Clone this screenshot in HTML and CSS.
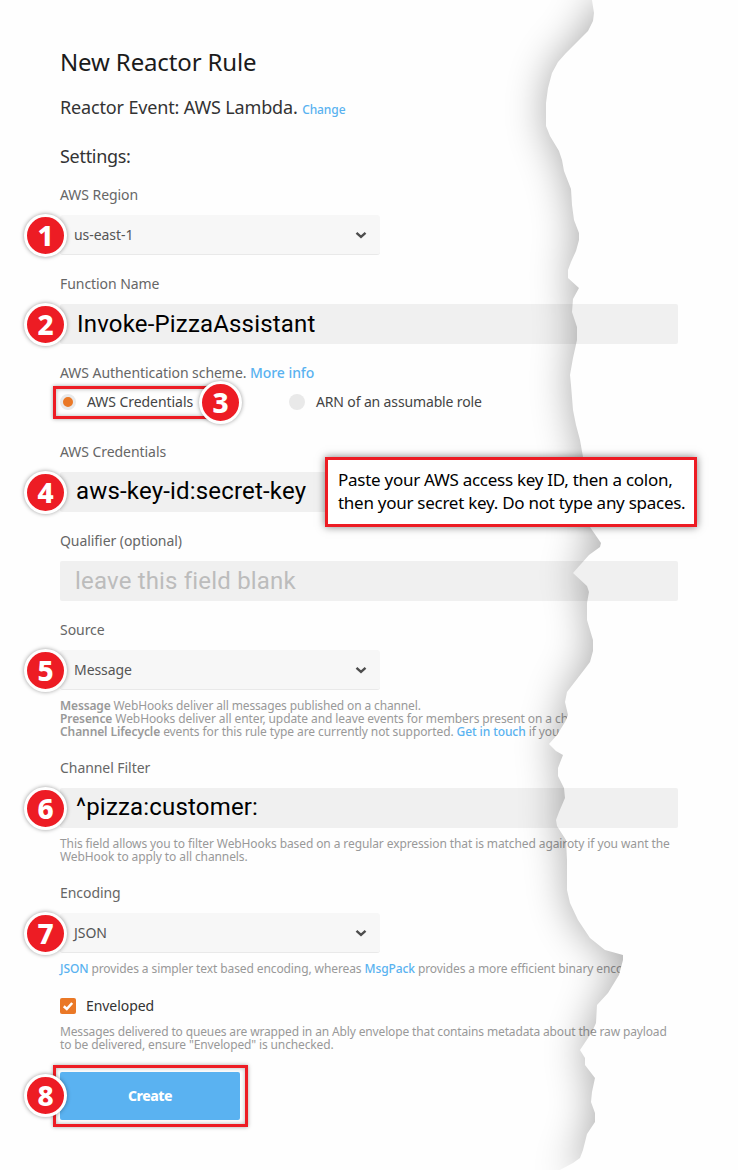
FILE: index.html
```html
<!DOCTYPE html>
<html lang="en">
<head>
<meta charset="utf-8">
<title>New Reactor Rule</title>
<link rel="stylesheet" href="styles.css">
</head>
<body>
<main class="page">
  <h1 class="title">New Reactor Rule</h1>
  <p class="event">Reactor Event: AWS Lambda. <a class="change">Change</a></p>
  <h2 class="settings">Settings:</h2>

  <section class="field">
    <label class="label">AWS Region</label>
    <div class="select"><span class="badge">1</span><span>us-east-1</span><svg class="chevron" viewBox="0 0 12 8"><path d="M1.5 1.8 6 5.8 10.500 1.800"/></svg></div>
  </section>

  <section class="field">
    <label class="label">Function Name</label>
    <div class="input"><span class="badge">2</span><span>Invoke-PizzaAssistant</span></div>
  </section>

  <section class="field auth">
    <label class="label">AWS Authentication scheme. <a>More info</a></label>
    <div class="radios">
      <div class="radio first"><span class="frame"></span><i class="dot on"></i><span>AWS Credentials</span><span class="badge side">3</span></div>
      <div class="radio"><i class="dot"></i><span>ARN of an assumable role</span></div>
    </div>
  </section>

  <section class="field">
    <label class="label">AWS Credentials</label>
    <div class="input key"><span class="badge">4</span><span>aws-key-id:secret-key</span>
      <div class="callout">Paste your AWS access key ID, then a colon,<br>then your secret key. Do not type any spaces.</div>
    </div>
  </section>

  <section class="field">
    <label class="label">Qualifier (optional)</label>
    <div class="input blank"><span>leave this field blank</span></div>
  </section>

  <section class="field">
    <label class="label">Source</label>
    <div class="select"><span class="badge">5</span><span>Message</span><svg class="chevron" viewBox="0 0 12 8"><path d="M1.5 1.8 6 5.8 10.500 1.800"/></svg></div>
    <p class="help source"><b>Message</b> WebHooks deliver all messages published on a channel.<br><span class="wide"><b>Presence</b> WebHooks deliver all enter, update and leave events for members present on a cha</span><br><span class="wide"><b>Channel Lifecycle</b> events for this rule type are currently not supported. <a>Get in touch</a> if you</span></p>
  </section>

  <section class="field">
    <label class="label">Channel Filter</label>
    <div class="input caret"><span class="badge">6</span><span>^pizza:customer:</span></div>
    <p class="help wide">This field allows you to filter WebHooks based on a regular expression that is matched agairoty if you want the<br>WebHook to apply to all channels.</p>
  </section>

  <section class="field">
    <label class="label">Encoding</label>
    <div class="select"><span class="badge">7</span><span>JSON</span><svg class="chevron" viewBox="0 0 12 8"><path d="M1.5 1.8 6 5.8 10.500 1.800"/></svg></div>
    <p class="help formats"><a>JSON</a> provides a simpler text based encoding, whereas <a>MsgPack</a> provides a more efficient binary enco</p>
  </section>

  <div class="check"><span class="box"><svg viewBox="0 0 16 16"><path d="M3.800 8.300 6.800 11 12.200 5"/></svg></span><span>Enveloped</span></div>
  <p class="help envelope">Messages delivered to queues are wrapped in an Ably envelope that contains metadata about the raw payload<br>to be delivered, ensure "Enveloped" is unchecked.</p>

  <div class="action"><span class="frame"></span><button class="create">Create</button><span class="badge">8</span></div>
</main>

<svg class="tear" viewBox="0 0 738 1170">
  <defs>
    <clipPath id="paper"><path d="M0 0H592L594 13 593 21 588 31 580 39 566 53 558 62 552 73 548 88 546 103 546 126 550 136 559 151 562 160 564 171 571 189 572 205 574 220 579 233 579 240 576 251 571 262 568 270 568 278 579 288 573 299 572 312 577 327 577 340 573 358 570 375 571 385 573 410 576 425 580 440 583 457 586 500 590 527 601 543 600 547 589 555 573 573 587 586 589 592 587 603 587 620 593 640 593 651 590 662 584 670 567 692 565 702 568 715 565 722 557 735 549 744 556 751 563 755 558 768 558 776 564 788 565 798 559 812 556 820 557 826 566 840 567 860 567 890 570 903 578 920 590 938 605 950 623 955 623 960 619 975 608 993 597 1005 596 1023 592 1032 586 1041 580 1050 585 1058 585 1065 595 1078 592 1092 591 1102 595 1113 595 1122 587 1134 583 1150 580 1158 573 1163 560 1170H0Z"/></clipPath>
    <filter id="soft" filterUnits="userSpaceOnUse" x="400" y="-80" width="500" height="1330"><feGaussianBlur stdDeviation="20"/></filter>
  </defs>
  <path class="cover" d="M568 698V715L565 722 557 735 549 744H700V698ZM623 958 619 975V980H700V958Z"/>
  <g clip-path="url(#paper)">
    <path class="shade" filter="url(#soft)" d="M592 0 594 13 593 21 588 31 580 39 566 53 558 62 552 73 548 88 546 103 546 126 550 136 559 151 562 160 564 171 571 189 572 205 574 220 579 233 579 240 576 251 571 262 568 270 568 278 579 288 573 299 572 312 577 327 577 340 573 358 570 375 571 385 573 410 576 425 580 440 583 457 586 500 590 527 601 543 600 547 589 555 573 573 587 586 589 592 587 603 587 620 593 640 593 651 590 662 584 670 567 692 565 702 568 715 565 722 557 735 549 744 556 751 563 755 558 768 558 776 564 788 565 798 559 812 556 820 557 826 566 840 567 860 567 890 570 903 578 920 590 938 605 950 623 955 623 960 619 975 608 993 597 1005 596 1023 592 1032 586 1041 580 1050 585 1058 585 1065 595 1078 592 1092 591 1102 595 1113 595 1122 587 1134 583 1150 580 1158 573 1163 560 1170H850V0Z"/>
  </g>
</svg>
</body>
</html>
```

FILE: styles.css
```css
* { box-sizing: border-box; }

body {
  margin: 0;
  background: #fefefe;
  color: #666;
  font: 14px/20px "Noto Sans", "Open Sans", sans-serif;
  letter-spacing: -0.06px;
}

h1, h2, p { margin: 0; font-weight: 400; white-space: nowrap; }
a { color: #59b2f0; font-weight: 500; }

.page { width: 738px; height: 1170px; padding: 46px 60px 0; overflow: hidden; }
.title { font-size: 24px; line-height: 32px; letter-spacing: -0.14px; color: #1b1b1b; }
.event { margin-top: 17px; font-size: 18px; line-height: 24px; letter-spacing: -0.15px; color: #333; }
.change { font-size: 12px; font-weight: 500; letter-spacing: -0.1px; }
.settings { margin-top: 22px; font-size: 18px; line-height: 24px; letter-spacing: -0.3px; color: #333; }

.field { margin-top: 19px; }
.settings + .field { margin-top: 17px; }
.auth + .field { margin-top: 30px; }
.label { display: block; margin-bottom: 10px; }
.auth .label { margin-bottom: 9px; }

.select, .input { position: relative; display: flex; align-items: center; height: 40px; border-radius: 2px; white-space: nowrap; }
.select { width: 320px; padding: 0 13px 0 14px; justify-content: space-between; background: #f7f7f7; border-bottom: 1px solid #e9e9e9; border-radius: 3px; color: #555; }
.chevron { width: 12px; height: 8px; fill: none; stroke: #4d4d4d; stroke-width: 2.4; }
.input { width: 618px; padding: 0 0 1px 17px; background: #f0f0f0; color: #000; font: 24px/38px Roboto, sans-serif; letter-spacing: 0.18px; }
.input.key, .input.caret { padding: 0 0 3px 16px; }
.blank { padding-left: 15px; color: #bcbcbc; }

.badge {
  position: absolute; left: -36px; top: -1px; width: 43px; height: 43px;
  border: 3px solid #fff; border-radius: 50%; background: #ed1c24;
  box-shadow: 0 0 4px rgba(0, 0, 0, 0.4);
  color: #fff; font: 800 28px/36px "Noto Sans", sans-serif; letter-spacing: 0; text-align: center;
}

.radios { display: flex; height: 20px; color: #444; }
.radio { position: relative; display: flex; align-items: center; gap: 11px; white-space: nowrap; letter-spacing: -0.14px; }
.radio.first { width: 229px; gap: 11px; letter-spacing: -0.06px; }
.dot { width: 16px; height: 16px; border-radius: 50%; background: #e9e9e9; }
.dot.on { border: 3px solid #e9e9e9; background: #ea7826; }
.side { left: 139px; top: -11px; }
.frame { position: absolute; border: 3px solid #ed1c24; box-shadow: 0 0 4px rgba(0, 0, 0, 0.35), inset 0 0 4px rgba(0, 0, 0, 0.3); }
.radio .frame { left: -7px; top: -6px; width: 165px; height: 33px; }

.callout {
  position: absolute; z-index: 3; left: 265px; top: -15px; width: 372px; height: 70px; padding: 8px 10px;
  border: 3px solid #ed1c24; background: #fff; box-shadow: 0 0 8px rgba(0, 0, 0, 0.5);
  color: #000; font: 17px/23px "Noto Sans", sans-serif; letter-spacing: -0.27px;
}

.help { margin-top: 9px; padding-bottom: 1px; color: #999; font-size: 12px; line-height: 13px; letter-spacing: -0.14px; }
.wide { letter-spacing: -0.1px; }
.source .wide { letter-spacing: -0.09px; }
.formats { letter-spacing: -0.1px; }
.help b { font-weight: 600; }

.check { display: flex; align-items: center; gap: 10px; height: 16px; margin-top: 22px; color: #333; }
.box { width: 16px; height: 16px; border-radius: 2px; background: #ea7826; }
.box svg { display: block; fill: none; stroke: #fff; stroke-width: 2.6; }
.envelope { margin-top: 11px; }

.action { position: relative; width: 180px; height: 48px; margin-top: 20px; }
.action .frame { left: -7px; top: -7px; width: 195px; height: 62px; }
.create { position: relative; display: block; width: 180px; height: 48px; padding: 0; border: 0; border-radius: 2px; background: #5ab2f1; color: #fff; font: 800 14px/48px "Noto Sans", sans-serif; letter-spacing: -0.5px; }
.action .badge { top: 2px; }

.tear { position: absolute; z-index: 2; left: 0; top: 0; width: 738px; height: 1170px; pointer-events: none; }
.cover { fill: #fefefe; }
.shade { fill: #000; opacity: 0.34; }
```
